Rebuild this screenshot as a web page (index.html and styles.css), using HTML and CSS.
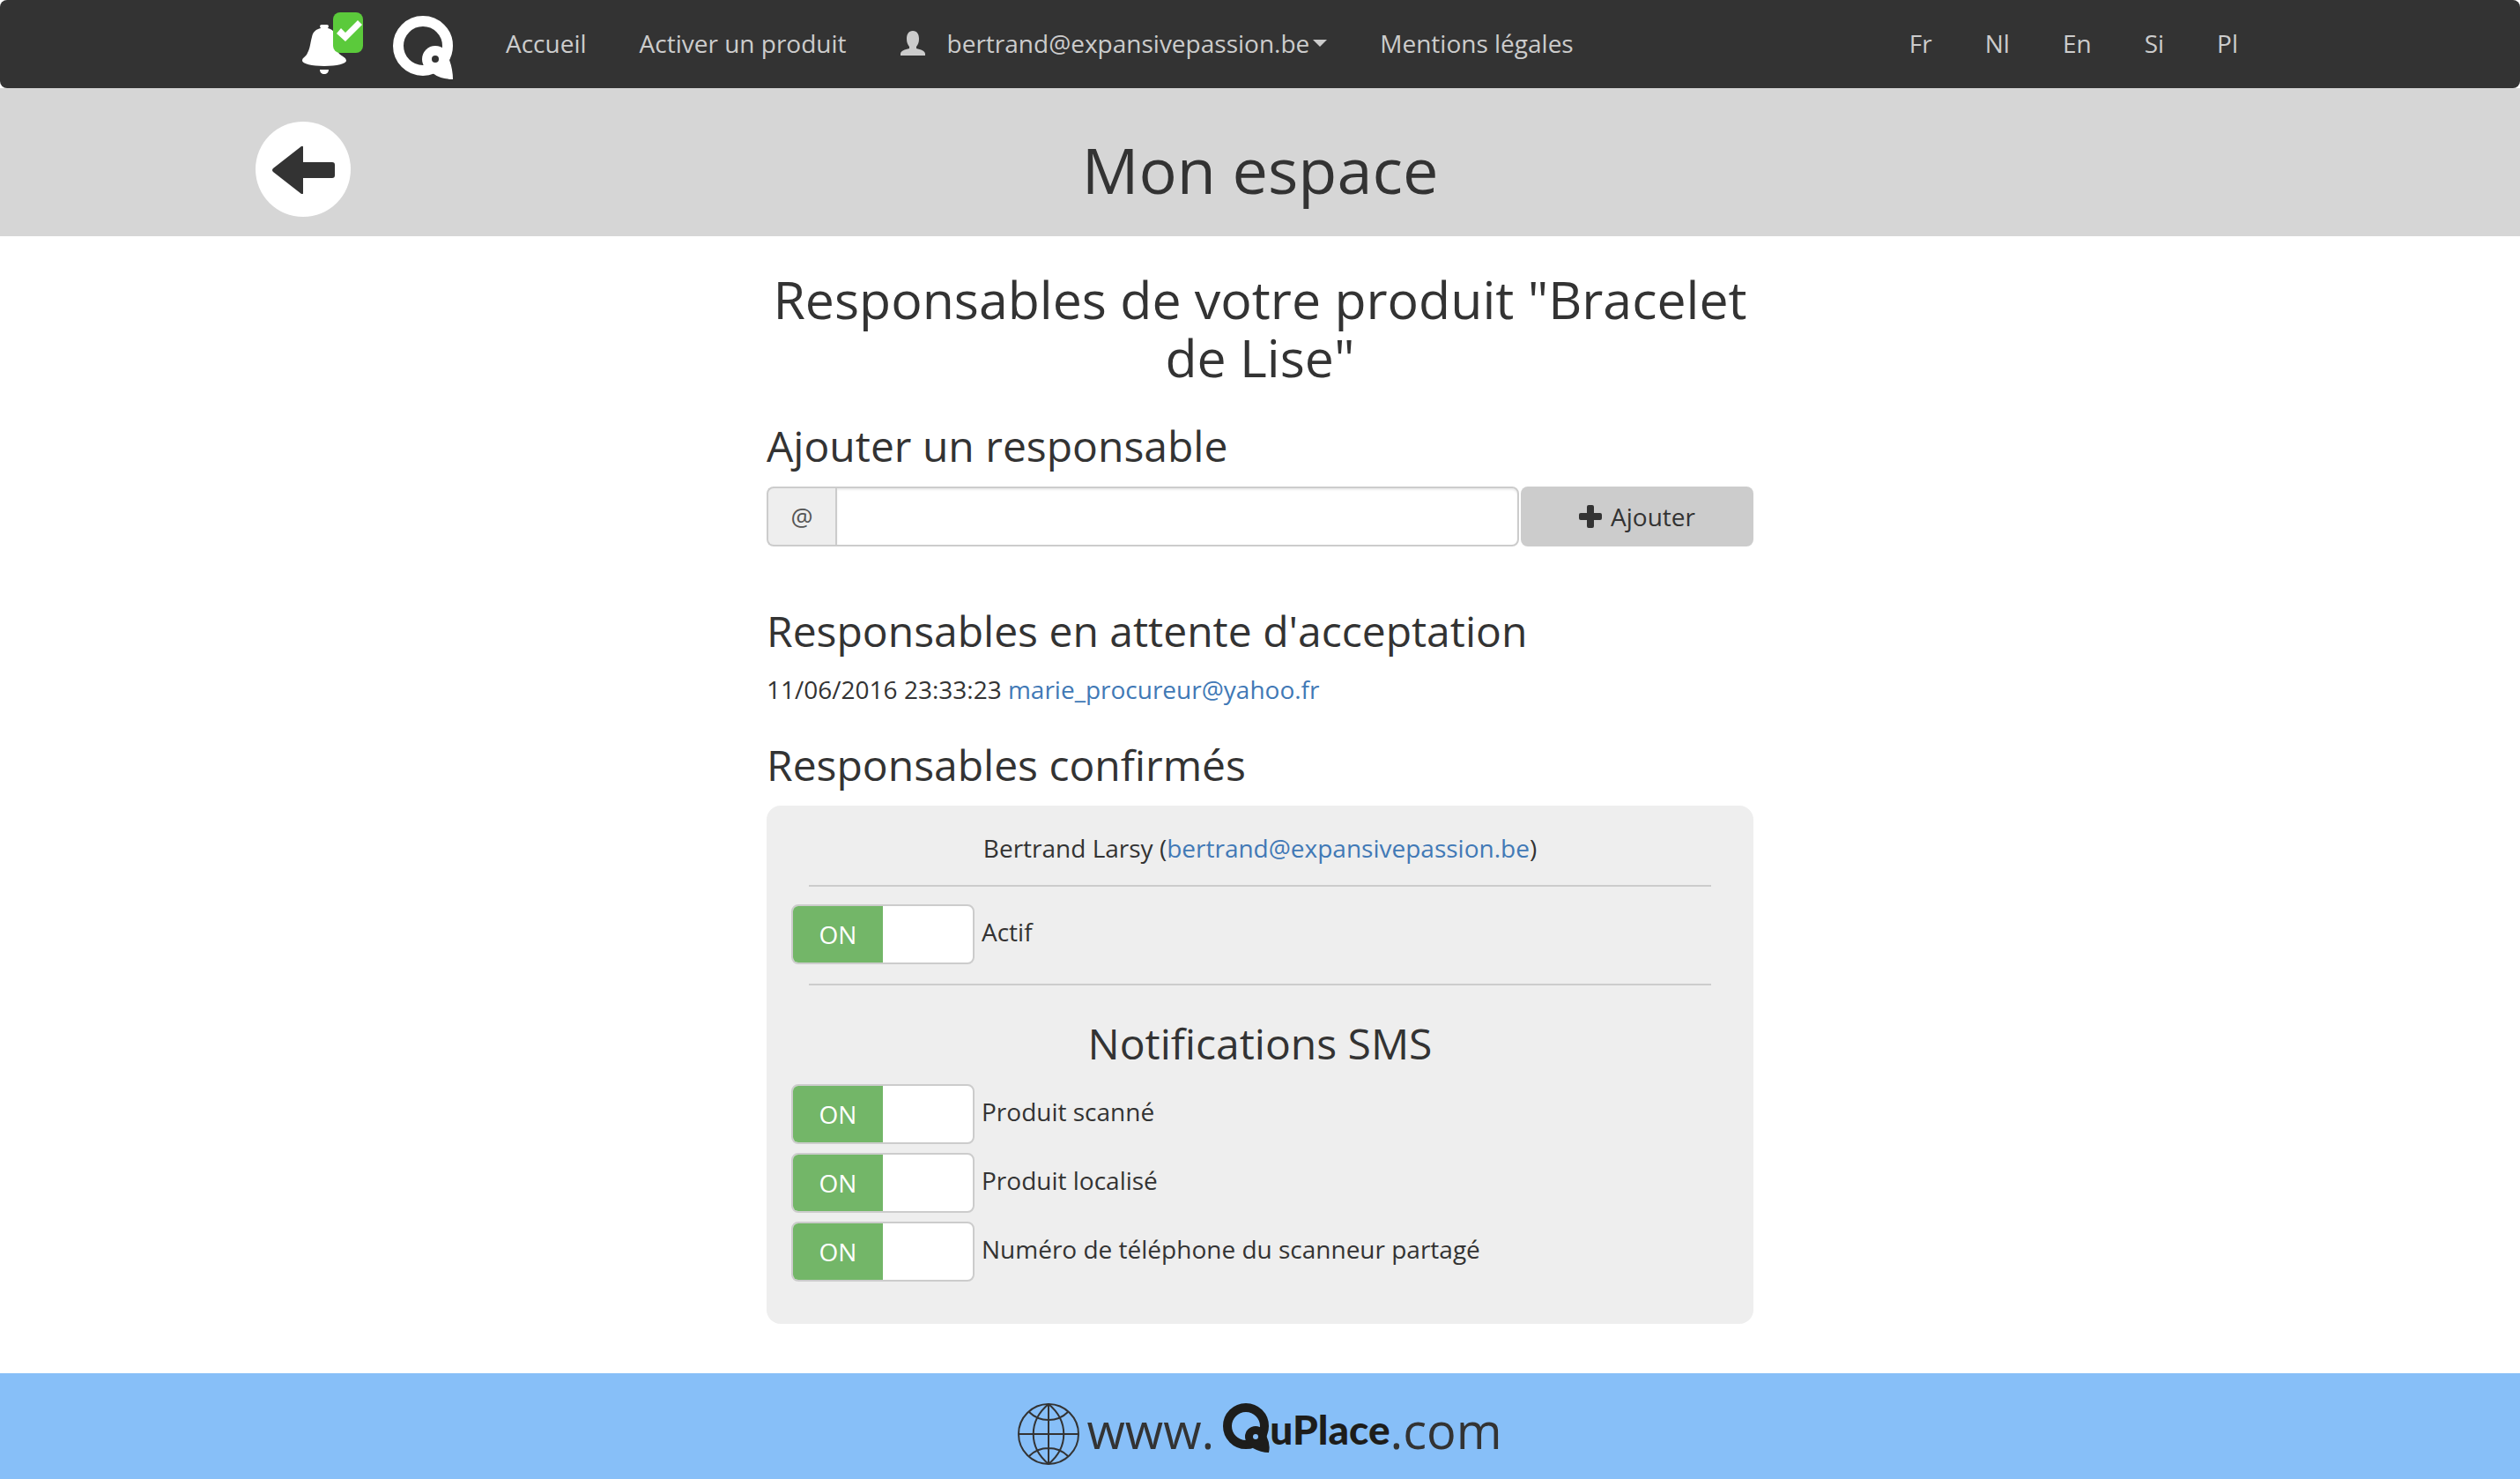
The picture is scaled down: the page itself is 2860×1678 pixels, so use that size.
FILE: index.html
```html
<!DOCTYPE html>
<html lang="fr">
<head>
<meta charset="utf-8">
<title>Mon espace</title>
<link rel="stylesheet" href="styles.css">
</head>
<body>
<nav class="navbar">
  <div class="container navbar-inner">
    <a class="alerts" href="#" aria-label="Notifications">
      <svg class="bell" viewBox="0 0 50 56" aria-hidden="true"><path fill="#fff" d="M22 0h6q2 0 2 2l-1 2c5 1 8 4 9 10 1 9 1 15 4 19 3 3 8 4 8 8 0 3-11 6-25 6S0 44 0 41c0-4 4-4 6-9 3-5 3-11 5-18 1-6 5-9 10-10l-1-2q0-2 2-2zM20 51h10c0 3-2 5-5 5s-5-2-5-5z"/></svg>
      <span class="badge"><svg viewBox="0 0 34 46" aria-hidden="true"><path fill="#fff" d="M4 24l5-6 5 5L28 9l5 5-19 19z"/></svg></span>
    </a>
    <a class="brand" href="#" aria-label="QuPlace">
      <svg viewBox="0 0 68 72" aria-hidden="true"><circle cx="34" cy="34" r="28" fill="none" stroke="#fff" stroke-width="12"/><path fill="#fff" d="M66 40q-2 6-2 10 4 11 4 22-14 0-23-7l8-20z"/><circle cx="48" cy="49" r="15" fill="#fff"/><circle cx="48" cy="49" r="4" fill="#333"/></svg>
    </a>
    <ul class="menu">
      <li><a href="#">Accueil</a></li>
      <li><a href="#">Activer un produit</a></li>
      <li><a class="account" href="#">
        <svg class="user" viewBox="0 0 30 28" aria-hidden="true"><path fill="#ccc" d="M15 0c5 0 7 4 7 9 0 4-1 6-3 9v2c5 1 10 3 10 6v2H1v-2c0-3 5-5 10-6v-2c-2-3-3-5-3-9 0-5 2-9 7-9z"/></svg>
        <span>bertrand@expansivepassion.be</span><span class="caret"></span></a></li>
      <li><a href="#">Mentions légales</a></li>
    </ul>
    <ul class="menu languages">
      <li><a href="#">Fr</a></li>
      <li><a href="#">Nl</a></li>
      <li><a href="#">En</a></li>
      <li><a href="#">Si</a></li>
      <li><a href="#">Pl</a></li>
    </ul>
  </div>
</nav>

<header class="title-bar">
  <div class="container title-inner">
    <a class="back" href="#" aria-label="Retour">
      <svg viewBox="0 0 72 56" aria-hidden="true"><path fill="#333" d="M2 27L34 2q2-1 2 1v17h33q3 0 3 3v12q0 3-3 3H36v17q0 2-2 1L2 31q-2-2 0-4z"/></svg>
    </a>
    <h1>Mon espace</h1>
  </div>
</header>

<main class="content">
  <h2>Responsables de votre produit "Bracelet de Lise"</h2>

  <h3><label for="email">Ajouter un responsable</label></h3>
  <form class="add-form">
    <span class="addon">@</span>
    <input class="email" id="email" type="text">
    <button class="add" type="button">
      <svg class="plus" viewBox="0 0 26 26" aria-hidden="true"><path fill="#333" d="M11 0h4q2 0 2 2v7h7q2 0 2 2v4q0 2-2 2h-7v7q0 2-2 2h-4q-2 0-2-2v-7H2q-2 0-2-2v-4q0-2 2-2h7V2q0-2 2-2z"/></svg>
      Ajouter</button>
  </form>

  <h3>Responsables en attente d'acceptation</h3>
  <p>11/06/2016 23:33:23 <a href="#">marie_procureur@yahoo.fr</a></p>

  <h3>Responsables confirmés</h3>
  <section class="panel">
    <p class="person">Bertrand Larsy (<a href="#">bertrand@expansivepassion.be</a>)</p>
    <hr>
    <label class="option"><span class="toggle"><input type="checkbox" checked><span class="on">ON</span></span>Actif</label>
    <hr>
    <h3>Notifications SMS</h3>
    <div class="options">
      <label class="option"><span class="toggle"><input type="checkbox" checked><span class="on">ON</span></span>Produit scanné</label>
      <label class="option"><span class="toggle"><input type="checkbox" checked><span class="on">ON</span></span>Produit localisé</label>
      <label class="option"><span class="toggle"><input type="checkbox" checked><span class="on">ON</span></span>Numéro de téléphone du scanneur partagé</label>
    </div>
  </section>
</main>

<footer class="footer">
  <a class="site" href="#">
    <svg class="globe" viewBox="0 0 70 70" fill="none" stroke="#333" stroke-width="2" aria-hidden="true"><circle cx="35" cy="35" r="34"/><path d="M35 1v68M1 35h68M35 1C12 20 12 50 35 69M35 1c23 19 23 49 0 68M13 10c12 12 32 12 44 0M13 60c12-12 32-12 44 0"/></svg>
    <span>www.</span>
    <svg class="logo-q" viewBox="0 0 53 56" aria-hidden="true"><circle cx="26" cy="26" r="21" fill="none" stroke="#1d1d1b" stroke-width="10"/><path fill="#1d1d1b" d="M51 31q-2 5-1 8 4 8 2 17-9 0-18-5l5-16z"/><circle cx="37" cy="38" r="12" fill="#1d1d1b"/><circle cx="37" cy="38" r="3" fill="#87bff8"/></svg>
    <span class="logo-text">uPlace</span>
    <span>.com</span>
  </a>
</footer>
</body>
</html>
```

FILE: styles.css
```css
* { box-sizing: border-box; }

body {
  margin: 0;
  background: #fff;
  color: #333;
  font: 28px/40px "Open Sans", "Noto Sans", sans-serif;
}

h1, h2, h3, p, ul { margin: 0; padding: 0; }
h1, h2, h3 { font-weight: 400; }
h1 { font-size: 72px; line-height: 80px; text-align: center; }
h2 { font-size: 59px; line-height: 66px; text-align: center; }
h3 { font-size: 48px; line-height: 52px; margin: 40px 0 20px; }
a { color: #4179b6; text-decoration: none; }
svg { display: block; flex: none; }

.container { max-width: 2340px; margin: 0 auto; padding: 0 30px; }

/* Navigation */
.navbar { background: #333; border-radius: 8px; }
.navbar-inner { display: flex; align-items: center; min-height: 100px; }
.alerts { position: relative; margin-left: 53px; padding-top: 12px; }
.bell { width: 50px; height: 56px; }
.badge {
  position: absolute;
  left: 35px;
  top: -2px;
  width: 34px;
  height: 46px;
  border-radius: 8px;
  background: #5bca3b;
}
.brand { margin-left: 53px; padding-top: 8px; }
.brand svg { width: 68px; height: 72px; }
.menu { display: flex; list-style: none; margin-left: 30px; }
.menu a { display: flex; align-items: center; padding: 0 30px 2px; color: #ccc; }
.languages { margin-left: auto; }
.user { width: 30px; height: 28px; margin-right: 24px; }
.caret {
  margin-left: 4px;
  border: 8px solid transparent;
  border-top-color: #ccc;
  border-bottom: 0;
}

/* Page title */
.title-bar { background: #d6d6d6; padding: 38px 0 22px; }
.title-inner { display: grid; grid-template-columns: 108px 1fr 108px; align-items: center; }
.back {
  display: grid;
  place-items: center;
  width: 108px;
  height: 108px;
  border-radius: 50%;
  background: #fff;
}
.back svg { width: 72px; height: 56px; }

/* Main column */
.content { max-width: 1120px; margin: 0 auto; padding: 38px 0 56px; }
.content h2 { margin-bottom: 42px; }
.add-form { display: flex; height: 68px; margin-bottom: 70px; }
.addon {
  width: 78px;
  border: 2px solid #ccc;
  border-right: 0;
  border-radius: 8px 0 0 8px;
  background: #eee;
  color: #555;
  line-height: 64px;
  text-align: center;
}
.email {
  flex: 1;
  min-width: 0;
  padding: 0 24px;
  border: 2px solid #ccc;
  border-radius: 0 8px 8px 0;
  box-shadow: inset 0 2px 2px rgba(0, 0, 0, .075);
  color: #555;
  font: inherit;
}
.add {
  display: flex;
  align-items: center;
  justify-content: center;
  gap: 10px;
  width: 264px;
  margin-left: 2px;
  border: 0;
  border-radius: 8px;
  background: #ccc;
  color: #333;
  font: inherit;
  font-weight: 500;
}
.plus { width: 26px; height: 26px; }

.panel { padding: 28px 28px 48px; border-radius: 16px; background: #eee; }
.panel h3, .person { text-align: center; }
.panel hr { margin: 22px 20px 20px; border: 0; border-top: 2px solid #ccc; }
.options { display: grid; gap: 10px; }
.option { display: flex; gap: 8px; line-height: 62px; }
.toggle {
  position: relative;
  flex: none;
  width: 208px;
  height: 68px;
  border: 2px solid #ccc;
  border-radius: 8px;
  background: #fff;
  overflow: hidden;
}
.toggle input { position: absolute; inset: 0; width: 100%; height: 100%; margin: 0; opacity: 0; }
.on {
  display: block;
  width: 50%;
  background: #73b668;
  color: #fff;
  font-weight: 500;
  line-height: 64px;
  text-align: center;
}

/* Footer */
.footer { display: flex; justify-content: center; padding: 34px 0 16px; background: #87bff8; }
.site { display: flex; align-items: flex-start; color: #333; font-size: 56px; line-height: 60px; }
.globe { width: 70px; height: 70px; margin-right: 8px; }
.logo-q { width: 53px; height: 56px; margin-left: 10px; }
.logo-text { color: #1d1d1b; font-family: Lato, sans-serif; font-size: 46px; font-weight: 900; }
```
